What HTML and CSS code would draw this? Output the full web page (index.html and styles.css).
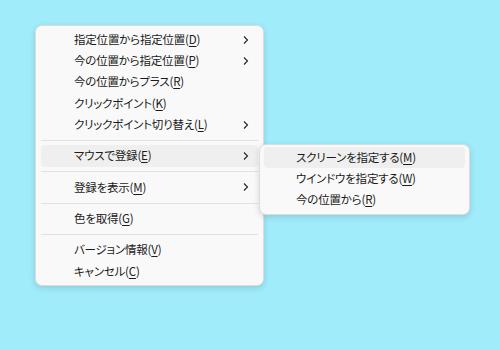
FILE: index.html
```html
<!DOCTYPE html>
<html lang="ja">
<head>
<meta charset="utf-8">
<link rel="stylesheet" href="styles.css">
</head>
<body>
<div class="desktop">
  <div class="menu main-menu">
    <div class="item"><span class="label">指定位置から指定位置(<u>D</u>)</span><svg class="chev" width="6" height="10" viewBox="0 0 6 10"><path d="M1 1.5 L4.5 5 L1 8.5" fill="none" stroke="#222" stroke-width="1.1"/></svg></div>
    <div class="item"><span class="label">今の位置から指定位置(<u>P</u>)</span><svg class="chev" width="6" height="10" viewBox="0 0 6 10"><path d="M1 1.5 L4.5 5 L1 8.5" fill="none" stroke="#222" stroke-width="1.1"/></svg></div>
    <div class="item"><span class="label">今の位置からプラス(<u>R</u>)</span></div>
    <div class="item"><span class="label">クリックポイント(<u>K</u>)</span></div>
    <div class="item"><span class="label">クリックポイント切り替え(<u>L</u>)</span><svg class="chev" width="6" height="10" viewBox="0 0 6 10"><path d="M1 1.5 L4.5 5 L1 8.5" fill="none" stroke="#222" stroke-width="1.1"/></svg></div>
    <div class="sep"></div>
    <div class="item active"><span class="label">マウスで登録(<u>E</u>)</span><svg class="chev" width="6" height="10" viewBox="0 0 6 10"><path d="M1 1.5 L4.5 5 L1 8.5" fill="none" stroke="#222" stroke-width="1.1"/></svg></div>
    <div class="sep"></div>
    <div class="item"><span class="label">登録を表示(<u>M</u>)</span><svg class="chev" width="6" height="10" viewBox="0 0 6 10"><path d="M1 1.5 L4.5 5 L1 8.5" fill="none" stroke="#222" stroke-width="1.1"/></svg></div>
    <div class="sep"></div>
    <div class="item"><span class="label">色を取得(<u>G</u>)</span></div>
    <div class="sep"></div>
    <div class="item"><span class="label">バージョン情報(<u>V</u>)</span></div>
    <div class="item"><span class="label">キャンセル(<u>C</u>)</span></div>
  </div>
  <div class="menu sub-menu">
    <div class="item active"><span class="label">スクリーンを指定する(<u>M</u>)</span></div>
    <div class="item"><span class="label">ウインドウを指定する(<u>W</u>)</span></div>
    <div class="item"><span class="label">今の位置から(<u>R</u>)</span></div>
  </div>
</div>
</body>
</html>
```

FILE: styles.css
```css
html, body {
  margin: 0;
  padding: 0;
}
body {
  width: 500px;
  height: 350px;
  background: #a0ecfb;
  font-family: "Noto Sans CJK JP", "Noto Sans", sans-serif;
  font-size: 11.5px;
  color: #1b1b1b;
  overflow: hidden;
}
.desktop {
  position: relative;
  width: 500px;
  height: 350px;
}
.menu {
  position: absolute;
  box-sizing: border-box;
  background: #f9f9f9;
  border: 1px solid #dcdcdc;
  border-radius: 7px;
  box-shadow: 0 2px 6px rgba(0, 0, 0, 0.14);
  display: flex;
  flex-direction: column;
}
.main-menu {
  left: 35px;
  top: 25px;
  width: 229px;
  height: 261px;
  padding: 3px 5px;
}
.sub-menu {
  left: 259px;
  top: 144px;
  width: 211px;
  height: 71px;
  padding: 2px 4px 3px;
}
.item {
  height: 21.3px;
  display: flex;
  align-items: center;
  justify-content: space-between;
  padding: 0 9px 0 33px;
  border-radius: 4px;
  font-feature-settings: "palt";
  letter-spacing: -0.2px;
  white-space: nowrap;
}
.sub-menu .item {
  padding-left: 32px;
}
.item.active {
  background: #efefef;
}
.label {
  line-height: 1;
}
.label u {
  text-underline-offset: 2px;
}
.chev {
  display: block;
}
.sep {
  height: 10px;
  display: flex;
  align-items: center;
}
.sep::before {
  content: "";
  display: block;
  width: 100%;
  height: 1px;
  background: #e2e2e2;
}
```
